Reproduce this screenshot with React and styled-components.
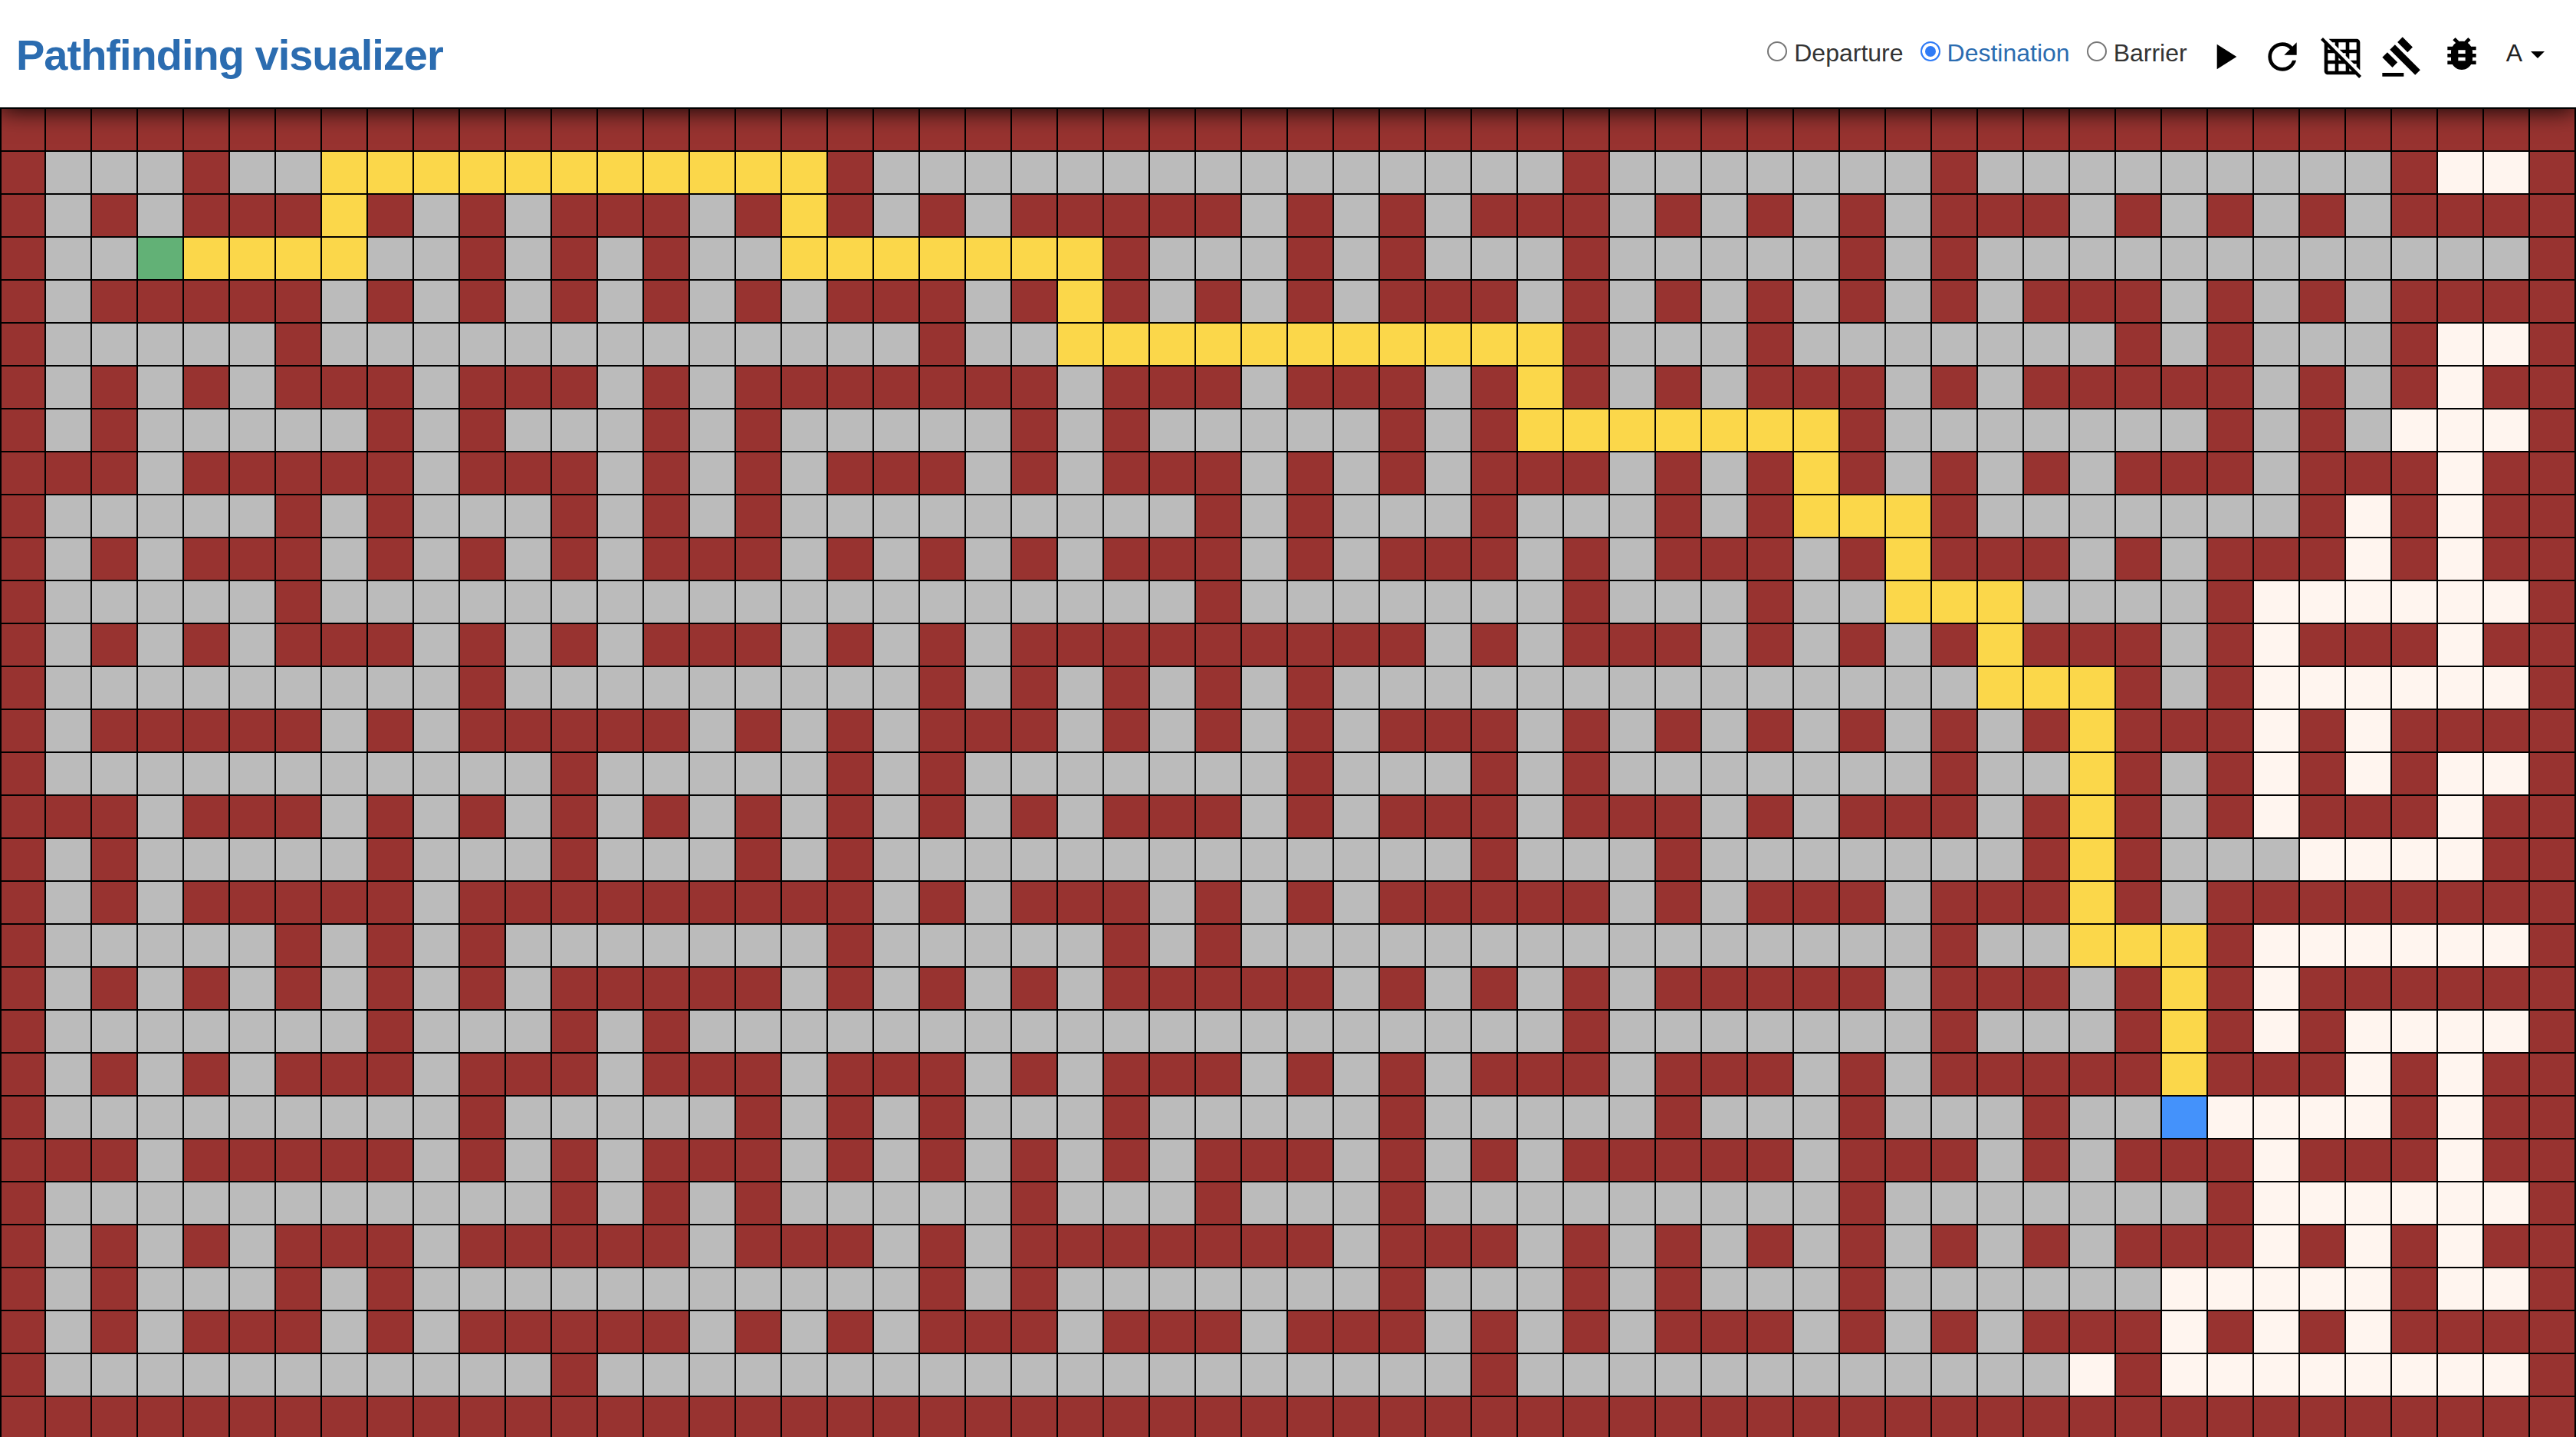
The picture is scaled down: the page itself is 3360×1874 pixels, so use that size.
import React from "react";
import styled, { createGlobalStyle } from "styled-components";
import { MdPlayArrow, MdRefresh, MdGridOff, MdGavel, MdBugReport } from "react-icons/md";

const Global = createGlobalStyle`
  html, body { margin: 0; padding: 0; height: 100%; overflow: hidden; background: #fff; }
  body { font-family: "Liberation Sans", Arial, sans-serif; }
`;

const WALL = "#".repeat(56);
const MAZE = [
  WALL,
  "#...#..YYYYYYYYYYY#" + "...............#.." + ".....#.........#WW#",
  "#.#.###Y#.#.###.#Y#" + ".#.#####.#.#.###.#" + ".#.#.###.#.#.#.####",
  "#..SYYYY..#.#.#..YY" + "YYYYY#...#.#...#.." + "...#.#............#",
  "#.#####.#.#.#.#.#.#" + "##.#Y#.#.#.###.#.#" + ".#.#.#.###.#.#.####",
  "#.....#............" + ".#..YYYYYYYYYYY#.." + ".#.......#.#...#WW#",
  "#.#.#.###.###.#.###" + "####.###.###.#Y#.#" + ".###.#.#####.#.#W##",
  "#.#.....#.#...#.#.." + "...#.#.....#.#YYYY" + "YYY#.......#.#.WWW#",
  "###.#####.###.#.#.#" + "##.#.###.#.#.###.#" + ".#Y#.#.#.###.###W##",
  "#.....#.#...#.#.#.." + ".......#.#...#...#" + ".#YYY#.......#W#W##",
  "#.#.###.#.#.#.###.#" + ".#.#.###.#.###.#.#" + "##.#Y###.#.###W#W##",
  "#.....#............" + ".......#.......#.." + ".#..YYY....#WWWWWW#",
  "#.#.#.###.#.#.###.#" + ".#.#########.#.###" + ".#.#.#Y###.#W###W##",
  "#.........#........" + ".#.#.#.#.#........" + "......YYY#.#WWWWWW#",
  "#.#####.#.#####.#.#" + ".###.#.#.#.###.#.#" + ".#.#.#.#Y###W#W####",
  "#...........#.....#" + ".#.......#...#.#.." + ".....#..Y#.#W#W#WW#",
  "###.###.#.#.#.#.#.#" + ".#.#.###.#.###.###" + ".#.###.#Y#.#W###W##",
  "#.#.....#...#...#.#" + ".............#...#" + ".......#Y#...WWWW##",
  "#.#.#####.#########" + ".#.###.#.#.#####.#" + ".###.###Y#.########",
  "#.....#.#.#.......#" + ".....#.#.........." + ".....#..YYY#WWWWWW#",
  "#.#.#.#.#.#.#####.#" + ".#.#.#####.#.#.#.#" + "####.###.#Y#W######",
  "#.......#...#.#...." + "...............#.." + ".....#...#Y#W#WWWW#",
  "#.#.#.###.###.###.#" + "##.#.###.#.#.###.#" + "##.#.#####Y###W#W##",
  "#.........#.....#.#" + ".#...#.....#.....#" + "...#...#..EWWWW#W##",
  "###.#####.#.#.###.#" + ".#.#.#.###.#.#.###" + "##.###.#.###W###W##",
  "#...........#.#.#.." + "...#...#...#......" + "...#.......#WWWWWW#",
  "#.#.#.###.#####.###" + ".#.#######.###.#.#" + ".#.#.#.#.###W#W#W##",
  "#.#...#.#.........." + ".#.#.......#...#.#" + "...#......WWWWW#WW#",
  "#.#.###.#.#####.#.#" + ".###.###.###.#.#.#" + "##.#.#.###W#W#W####",
  "#...........#......" + ".............#...." + "........W#WWWWWWWW#",
  WALL,
];

const COLORS = {
  "#": "#983330",
  ".": "#bbbbbb",
  Y: "#fbd74a",
  W: "#fff5ef",
  S: "#62b176",
  E: "#4492fb",
};

const Page = styled.div`
  display: flex;
  flex-direction: column;
  width: 3360px;
  height: 1874px;
  overflow: hidden;
`;

const Header = styled.header`
  position: relative;
  z-index: 1;
  flex: 0 0 140px;
  display: flex;
  align-items: center;
  justify-content: space-between;
  padding: 0 41px 0 21px;
  background: #fff;
  box-shadow: 0 3px 30px rgba(0, 0, 0, 1);
`;

const Title = styled.h1`
  margin: 3px 0 0;
  font-size: 56px;
  line-height: 64px;
  font-weight: 700;
  letter-spacing: -1px;
  color: #2b6cb0;
`;

const Controls = styled.nav`
  display: flex;
  align-items: center;
  gap: 22px;
  height: 100%;
`;

const RadioLabel = styled.label`
  display: flex;
  align-items: center;
  gap: 9px;
  margin-bottom: 2px;
  font-size: 32px;
  line-height: 40px;
  color: ${(p) => (p.$active ? "#2b6cb0" : "#333333")};
`;

const Radio = styled.input.attrs({ type: "radio", name: "mode" })`
  appearance: none;
  box-sizing: border-box;
  width: 26px;
  height: 26px;
  margin: -4px 0 0;
  border: 2px solid #767676;
  border-radius: 50%;
  background: #fff;
  &:checked {
    border-color: #2f7bf6;
    background: #2f7bf6;
    box-shadow: inset 0 0 0 4px #fff;
  }
`;

const IconButton = styled.button`
  display: block;
  width: 56px;
  height: 56px;
  padding: 0;
  margin-top: ${(p) => p.$lift || "8px"};
  margin-inline: ${(p) => p.$pull || "0"};
  border: 0;
  background: none;
  color: #000;
  font-size: 56px;
  line-height: 0;
  svg { display: block; }
`;

const Language = styled.button`
  display: flex;
  align-items: center;
  gap: 11px;
  margin: 0 0 2px 8px;
  padding: 0;
  border: 0;
  background: none;
  font-family: inherit;
  font-size: 32px;
  line-height: 40px;
  font-weight: 400;
  color: #222;
`;

const Caret = styled.span`
  width: 0;
  height: 0;
  margin-top: 5px;
  border-left: 9px solid transparent;
  border-right: 9px solid transparent;
  border-top: 9px solid #000;
`;

const Board = styled.main`
  display: grid;
  grid-template-columns: repeat(56, 60px);
  grid-auto-rows: 56px;
  flex: none;
`;

const Cell = styled.div`
  box-sizing: border-box;
  background: ${(p) => COLORS[p.$kind]};
  border-top: 2px solid #000;
  border-right: 2px solid #000;
  &:nth-child(56n + 1) {
    border-left: 2px solid #000;
  }
`;

export default function App() {
  return (
    <Page>
      <Global />
      <Header>
        <Title>Pathfinding visualizer</Title>
        <Controls>
          <RadioLabel>
            <Radio value="departure" />
            Departure
          </RadioLabel>
          <RadioLabel $active>
            <Radio value="destination" defaultChecked />
            Destination
          </RadioLabel>
          <RadioLabel>
            <Radio value="barrier" />
            Barrier
          </RadioLabel>
          <IconButton aria-label="Run" $pull="-2px"><MdPlayArrow /></IconButton>
          <IconButton aria-label="Reset"><MdRefresh /></IconButton>
          <IconButton aria-label="Clear grid"><MdGridOff /></IconButton>
          <IconButton aria-label="Barriers"><MdGavel /></IconButton>
          <IconButton aria-label="Debug" $lift="0"><MdBugReport /></IconButton>
          <Language>
            A
            <Caret />
          </Language>
        </Controls>
      </Header>
      <Board>
        {MAZE.flatMap((row, r) =>
          row.split("").map((kind, c) => <Cell key={`${r}-${c}`} $kind={kind} />)
        )}
      </Board>
    </Page>
  );
}
